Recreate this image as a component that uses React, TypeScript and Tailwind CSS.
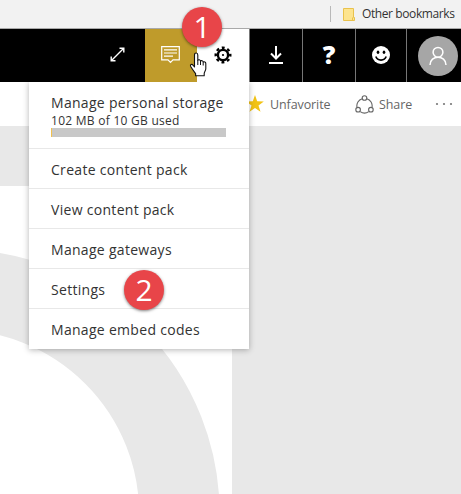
import type { ReactNode } from "react";

const menuItems = [
  "Create content pack",
  "View content pack",
  "Manage gateways",
  "Settings",
  "Manage embed codes",
];

const BookmarksBar = () => (
  <div className="flex h-[29px] shrink-0 items-center justify-end border-b border-[#a9a9a9] bg-[#f2f2f2] pr-[7px]">
    <div className="h-4 w-px bg-[#b9b9b9]" />
    <svg className="ml-3 h-[15px] w-3" viewBox="0 0 12 15">
      <path d="M.5 1.5h10v9h1v3H.5z" fill="#fde48e" stroke="#e9c24c" />
      <path d="M9.5 10.5v3" stroke="#e9c24c" />
    </svg>
    <span className="ml-[7px] w-[92px] text-[12px] leading-4 tracking-[-0.4px] whitespace-nowrap text-[#333]">
      Other bookmarks
    </span>
  </div>
);

const NavCell = ({ className, children }: { className: string; children?: ReactNode }) => (
  <div className={`flex h-full shrink-0 items-center justify-center ${className}`}>{children}</div>
);

const NavBar = () => (
  <div className="flex h-[53px] shrink-0 bg-black">
    <NavCell className="w-[90px]" />
    <NavCell className="w-[55px] pb-[2px]">
      <svg className="h-[15px] w-[15px]" viewBox="0 0 15 15" fill="none" stroke="#fff" strokeWidth="1.4">
        <path d="M1.5 13.5 13.5 1.5M9.5 1.2h4.3v4.3M1.2 9.5v4.3h4.3" />
      </svg>
    </NavCell>
    <NavCell className="w-[52px] bg-[#bf9b2b] pr-px pb-[2px]">
      <svg className="h-[19px] w-[19px]" viewBox="0 0 19 19" fill="none" stroke="#fff" strokeWidth="1.2">
        <path d="M.7 1.6h17.6v13.2H12l-2.5 2.5L7 14.8H.7zM3 4.8h13M3 8h13M3 11.2h9" />
      </svg>
    </NavCell>
    <NavCell className="w-[52px] bg-white pb-[2px]">
      <svg className="h-[18px] w-[18px]" viewBox="0 0 18 18">
        <g fill="none" stroke="#000">
          <circle cx="9" cy="9" r="5.1" strokeWidth="2.4" />
          <circle cx="9" cy="9" r="7.3" strokeWidth="2.4" strokeDasharray="2.9 2.833" strokeDashoffset="1.45" />
        </g>
        <circle cx="9" cy="9" r="1.1" fill="#000" />
      </svg>
    </NavCell>
    <NavCell className="w-[54px] border-x border-[#777] pb-[2px]">
      <svg className="h-[18px] w-4" viewBox="0 0 16 18" fill="none" stroke="#fff" strokeWidth="2">
        <path d="M8 0v12M3 7.5l5 5 5-5M1 17h14" />
      </svg>
    </NavCell>
    <NavCell className="w-[53px] border-r border-[#777] pb-[3px]">
      <span className="pt-px font-[Open_Sans] text-[25px] leading-none font-extrabold text-white">?</span>
    </NavCell>
    <NavCell className="w-[51px] border-r border-[#777] pb-[2px]">
      <svg className="h-[18px] w-[18px]" viewBox="0 0 18 18">
        <circle cx="9" cy="9" r="9" fill="#fff" />
        <ellipse cx="6" cy="6.3" rx="1.3" ry="1.8" />
        <ellipse cx="12" cy="6.3" rx="1.3" ry="1.8" />
        <path d="M3.8 10.5c1.7 4.8 8.7 4.8 10.4 0" fill="none" stroke="#000" strokeWidth="1.6" />
      </svg>
    </NavCell>
    <NavCell className="w-[54px] pl-2">
      <div className="flex h-10 w-10 shrink-0 items-center justify-center rounded-full bg-[#a6a6a6]">
        <svg className="h-5 w-[18px]" viewBox="0 0 18 20" fill="none" stroke="#fff" strokeWidth="1.5">
          <circle cx="9" cy="6.3" r="4.9" />
          <path d="M1 19c0-10.5 16-10.5 16 0" />
        </svg>
      </div>
    </NavCell>
  </div>
);

const ActionBar = () => (
  <div className="flex h-11 shrink-0 items-center bg-white pl-[246px] text-[12.5px] text-[#666]">
    <svg className="h-[18px] w-[18px] shrink-0" viewBox="0 0 18 18">
      <path d="m9 0 2.2 6.3 6.6.1-5.3 4 2 6.4L9 13l-5.5 3.8 2-6.4-5.3-4 6.6-.1z" fill="#f2c314" />
    </svg>
    <span className="ml-[6px] w-[61px] pt-[2px] tracking-[-0.1px] whitespace-nowrap">Unfavorite</span>
    <svg className="ml-6 h-[19px] w-[19px] shrink-0" viewBox="0 0 19 19" fill="none" stroke="#666" strokeWidth="1.1">
      <circle cx="9.5" cy="3" r="2.3" />
      <circle cx="3.1" cy="14.7" r="2.3" />
      <circle cx="15.9" cy="14.7" r="2.3" />
      <path d="M7.2 3.7A7.5 7.5 0 0 0 2 12.4M11.8 3.7a7.5 7.5 0 0 1 5.2 8.7M5.2 16.6a7.5 7.5 0 0 0 8.6 0" />
    </svg>
    <span className="ml-[5px] w-[34px] pt-[2px] tracking-[-0.1px] whitespace-nowrap">Share</span>
    <svg className="ml-[22px] h-1 w-[18px] shrink-0" viewBox="0 0 18 4" fill="#777">
      <circle cx="2" cy="2" r="1.1" />
      <circle cx="9" cy="2" r="1.1" />
      <circle cx="16" cy="2" r="1.1" />
    </svg>
  </div>
);

const SettingsMenu = () => (
  <div className="absolute top-[82px] left-[29px] w-[220px] bg-white text-[14px] text-[#333] shadow-[0_1px_6px_rgba(0,0,0,0.3)] [clip-path:inset(0_-10px_-10px_-10px)]">
    <div className="h-[67px] border-b border-[#e8e8e8] px-[22px] pt-3">
      <div className="leading-[18px] tracking-[0.3px] whitespace-nowrap">Manage personal storage</div>
      <div className="h-4 text-[12px] leading-[18px] tracking-[0.27px] whitespace-nowrap">102 MB of 10 GB used</div>
      <div className="h-[9px] w-[175px] border-l border-[#f2c14c] bg-[#c8c8c8]" />
    </div>
    {menuItems.map((label) => (
      <div
        key={label}
        className="flex h-10 items-center border-b border-[#e8e8e8] px-[22px] last:border-b-0"
      >
        <span className="pt-px tracking-[0.3px] whitespace-nowrap">{label}</span>
      </div>
    ))}
  </div>
);

const StepBadge = ({ step, className }: { step: number; className: string }) => (
  <div
    className={`absolute flex h-10 w-10 items-center justify-center rounded-full bg-[#e84549] font-[Open_Sans] text-[30px] leading-none font-medium text-white shadow-[0_1px_3px_rgba(0,0,0,0.5)] ${className}`}
  >
    {step}
  </div>
);

const App = () => {
  return (
    <div className="relative flex h-[494px] w-[461px] flex-col overflow-hidden bg-[#e8e8e8] font-['Open_Sans',sans-serif]">
      <BookmarksBar />
      <NavBar />
      <ActionBar />

      {/* Dashboard tile with the ring chart */}
      <div className="mt-[60px] w-[232px] flex-1 bg-white">
        <svg className="h-[308px] w-[232px]" viewBox="0 186 232 308">
          <circle cx="-44.8" cy="513.7" r="224.2" fill="none" stroke="#e8e8e8" strokeWidth="80.5" />
        </svg>
      </div>

      <SettingsMenu />
      <StepBadge step={1} className="top-[7px] left-[182px]" />
      <StepBadge step={2} className="top-[270px] left-[124px]" />

      {/* Hand pointer */}
      <svg className="absolute top-[52px] left-[189px] h-[25px] w-[18px]" viewBox="0 0 18 25">
        <path
          d="M5.5 15V3c0-2.7 3.3-2.7 3.3 0v5.3c.8-1.1 2.5-.6 2.7.8.9-1 2.5-.4 2.7.9 1-.7 2.6 0 2.6 1.6v5.2c0 1.8-1.6 2.9-1.6 4.6v2.4H6.6v-2.2c-1.5-2-3.5-4.5-4.9-7-1-2 1.2-2.9 2.3-1.4z"
          fill="#fff"
          stroke="#111"
          strokeWidth="1.1"
          strokeLinejoin="round"
        />
        <path d="M8.8 8v5M11.5 9v4M14.2 10v3.5" fill="none" stroke="#111" />
      </svg>
    </div>
  );
};

export default App;
